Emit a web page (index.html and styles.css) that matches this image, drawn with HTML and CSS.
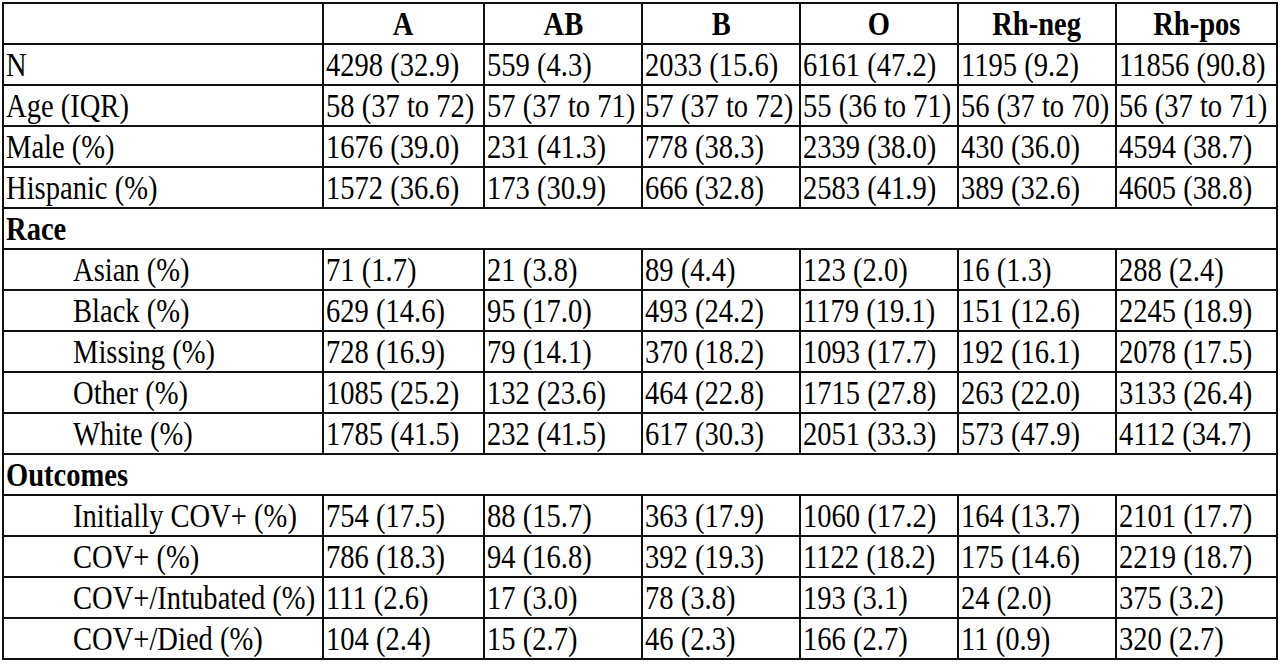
FILE: index.html
```html
<!DOCTYPE html>
<html lang="en">
<head>
<meta charset="utf-8">
<title>Blood type table</title>
<link rel="stylesheet" href="styles.css">
</head>
<body>
<div class="wrap">
<table class="data">
<colgroup>
<col class="c-label"><col class="c-first"><col class="c-val"><col class="c-val"><col class="c-val"><col class="c-val"><col class="c-last">
</colgroup>
<thead>
<tr><th></th><th><span class="t">A</span></th><th><span class="t">AB</span></th><th><span class="t">B</span></th><th><span class="t">O</span></th><th><span class="t">Rh-neg</span></th><th><span class="t">Rh-pos</span></th></tr>
</thead>
<tbody>
<tr><td><span class="t">N</span></td><td><span class="t">4298 (32.9)</span></td><td><span class="t">559 (4.3)</span></td><td><span class="t">2033 (15.6)</span></td><td><span class="t">6161 (47.2)</span></td><td><span class="t">1195 (9.2)</span></td><td><span class="t">11856 (90.8)</span></td></tr>
<tr><td><span class="t">Age (IQR)</span></td><td><span class="t">58 (37 to 72)</span></td><td><span class="t">57 (37 to 71)</span></td><td><span class="t">57 (37 to 72)</span></td><td><span class="t">55 (36 to 71)</span></td><td><span class="t">56 (37 to 70)</span></td><td><span class="t">56 (37 to 71)</span></td></tr>
<tr><td><span class="t">Male (%)</span></td><td><span class="t">1676 (39.0)</span></td><td><span class="t">231 (41.3)</span></td><td><span class="t">778 (38.3)</span></td><td><span class="t">2339 (38.0)</span></td><td><span class="t">430 (36.0)</span></td><td><span class="t">4594 (38.7)</span></td></tr>
<tr><td><span class="t">Hispanic (%)</span></td><td><span class="t">1572 (36.6)</span></td><td><span class="t">173 (30.9)</span></td><td><span class="t">666 (32.8)</span></td><td><span class="t">2583 (41.9)</span></td><td><span class="t">389 (32.6)</span></td><td><span class="t">4605 (38.8)</span></td></tr>
<tr class="section"><td colspan="7"><span class="t">Race</span></td></tr>
<tr><td class="ind"><span class="t">Asian (%)</span></td><td><span class="t">71 (1.7)</span></td><td><span class="t">21 (3.8)</span></td><td><span class="t">89 (4.4)</span></td><td><span class="t">123 (2.0)</span></td><td><span class="t">16 (1.3)</span></td><td><span class="t">288 (2.4)</span></td></tr>
<tr><td class="ind"><span class="t">Black (%)</span></td><td><span class="t">629 (14.6)</span></td><td><span class="t">95 (17.0)</span></td><td><span class="t">493 (24.2)</span></td><td><span class="t">1179 (19.1)</span></td><td><span class="t">151 (12.6)</span></td><td><span class="t">2245 (18.9)</span></td></tr>
<tr><td class="ind"><span class="t">Missing (%)</span></td><td><span class="t">728 (16.9)</span></td><td><span class="t">79 (14.1)</span></td><td><span class="t">370 (18.2)</span></td><td><span class="t">1093 (17.7)</span></td><td><span class="t">192 (16.1)</span></td><td><span class="t">2078 (17.5)</span></td></tr>
<tr><td class="ind"><span class="t">Other (%)</span></td><td><span class="t">1085 (25.2)</span></td><td><span class="t">132 (23.6)</span></td><td><span class="t">464 (22.8)</span></td><td><span class="t">1715 (27.8)</span></td><td><span class="t">263 (22.0)</span></td><td><span class="t">3133 (26.4)</span></td></tr>
<tr><td class="ind"><span class="t">White (%)</span></td><td><span class="t">1785 (41.5)</span></td><td><span class="t">232 (41.5)</span></td><td><span class="t">617 (30.3)</span></td><td><span class="t">2051 (33.3)</span></td><td><span class="t">573 (47.9)</span></td><td><span class="t">4112 (34.7)</span></td></tr>
<tr class="section"><td colspan="7"><span class="t">Outcomes</span></td></tr>
<tr><td class="ind"><span class="t">Initially COV+ (%)</span></td><td><span class="t">754 (17.5)</span></td><td><span class="t">88 (15.7)</span></td><td><span class="t">363 (17.9)</span></td><td><span class="t">1060 (17.2)</span></td><td><span class="t">164 (13.7)</span></td><td><span class="t">2101 (17.7)</span></td></tr>
<tr><td class="ind"><span class="t">COV+ (%)</span></td><td><span class="t">786 (18.3)</span></td><td><span class="t">94 (16.8)</span></td><td><span class="t">392 (19.3)</span></td><td><span class="t">1122 (18.2)</span></td><td><span class="t">175 (14.6)</span></td><td><span class="t">2219 (18.7)</span></td></tr>
<tr><td class="ind"><span class="t">COV+/Intubated (%)</span></td><td><span class="t">111 (2.6)</span></td><td><span class="t">17 (3.0)</span></td><td><span class="t">78 (3.8)</span></td><td><span class="t">193 (3.1)</span></td><td><span class="t">24 (2.0)</span></td><td><span class="t">375 (3.2)</span></td></tr>
<tr><td class="ind"><span class="t">COV+/Died (%)</span></td><td><span class="t">104 (2.4)</span></td><td><span class="t">15 (2.7)</span></td><td><span class="t">46 (2.3)</span></td><td><span class="t">166 (2.7)</span></td><td><span class="t">11 (0.9)</span></td><td><span class="t">320 (2.7)</span></td></tr>
</tbody>
</table>
</div>
</body>
</html>
```
FILE: styles.css
```css
html, body {
  margin: 0;
  padding: 0;
  background: #ffffff;
}
.wrap {
  padding: 2px 0 0 2px;
}
.data {
  border-collapse: collapse;
  table-layout: fixed;
  width: 1276px;
  font-family: "Liberation Serif", "Times New Roman", serif;
  font-size: 28px;
  color: #000;
}
.c-label { width: 320px; }
.c-first { width: 161px; }
.c-val { width: 158px; }
.c-last { width: 161px; }
.data th,
.data td {
  border: 2px solid #111;
  height: 39px;
  padding: 0 0 0 2px;
  white-space: nowrap;
  overflow: hidden;
  line-height: 39px;
  text-align: left;
  vertical-align: middle;
}
.data th {
  font-weight: bold;
  text-align: center;
  padding: 0;
}
.data td.ind {
  padding-left: 69px;
}
.data tr.section td {
  font-weight: bold;
}
.t {
  display: inline-block;
  transform: scale(1.02, 1.18);
  transform-origin: 0 50%;
}
.data th .t {
  transform-origin: 50% 50%;
}
```
